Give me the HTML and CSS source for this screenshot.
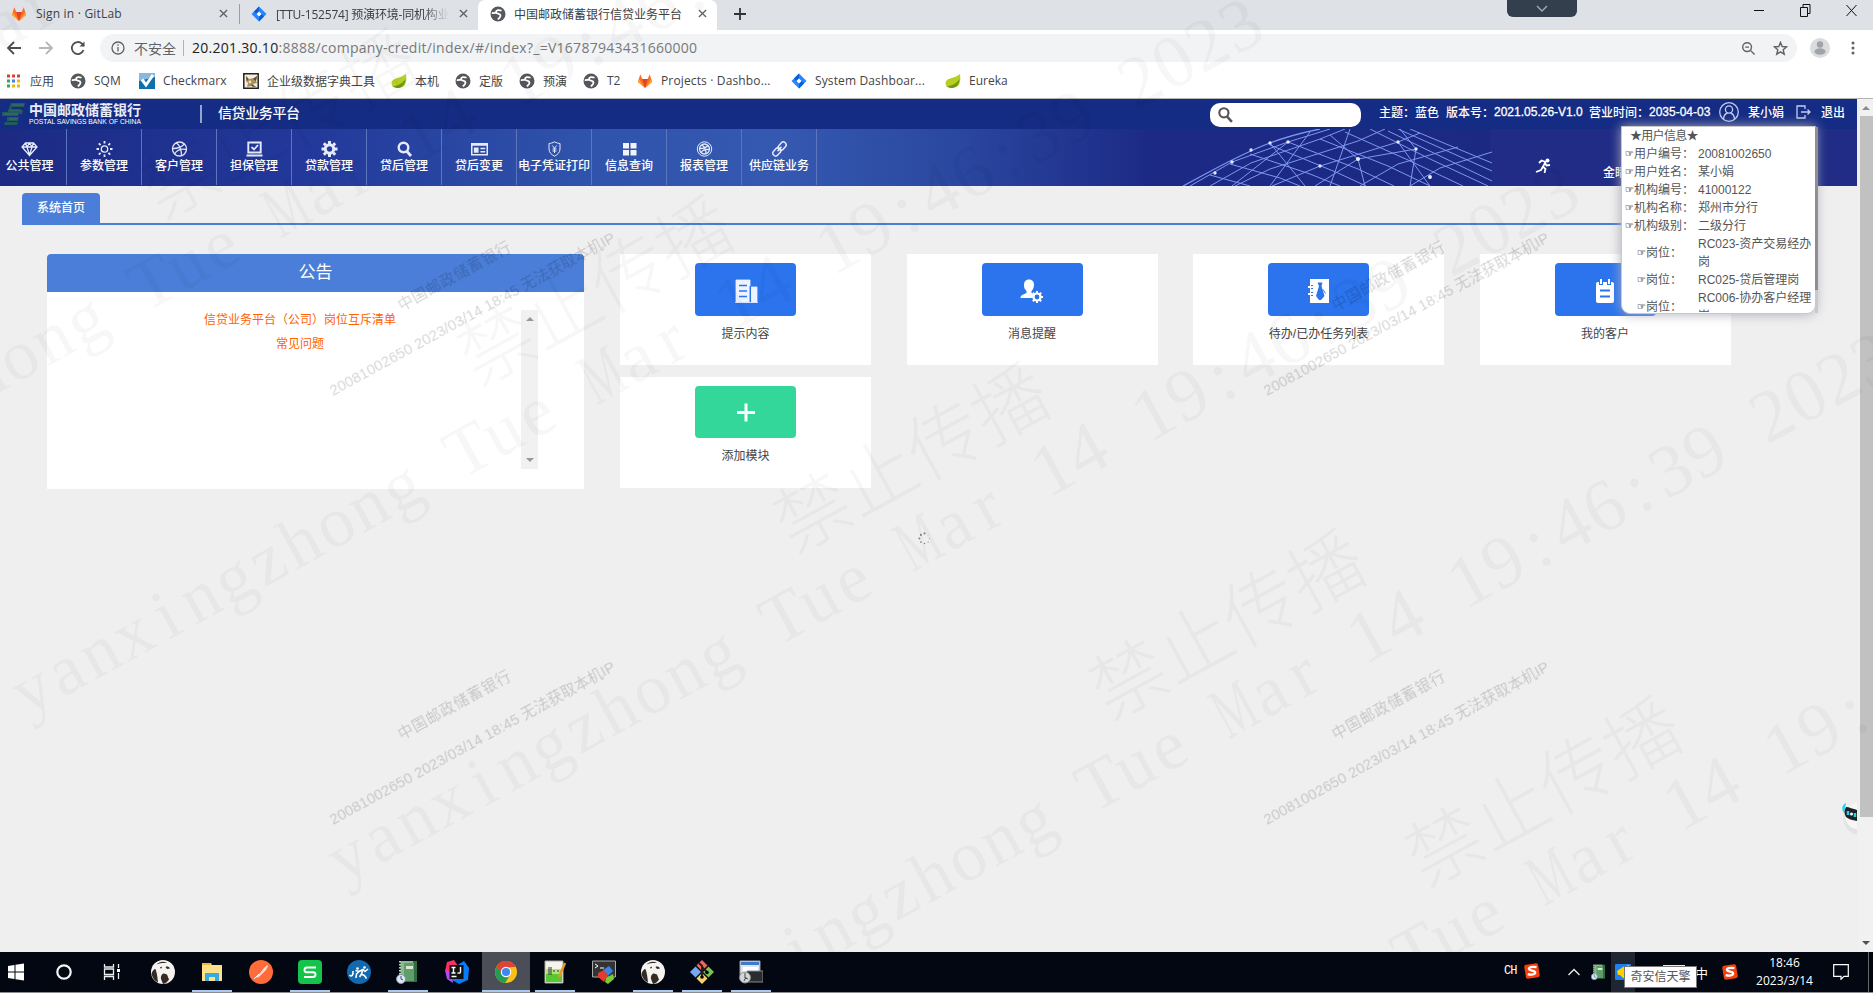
FILE: index.html
```
<!DOCTYPE html>
<html lang="zh-CN">
<head>
<meta charset="utf-8">
<title>中国邮政储蓄银行信贷业务平台</title>
<link rel="stylesheet" href="styles.css">
</head>
<body>
<svg class="defs" width="0" height="0">
  <defs>
    <symbol id="gitlab" viewBox="0 0 16 16"><path fill="#fc6d26" d="M1 9 3.2 1.2 5.4 6h5.2l2.2-4.8L15 9l-7 6z"/><path fill="#e24329" d="M5.2 6h5.6L8 15z"/><path fill="#fca326" d="M1 9l.8-3L8 15zM15 9l-.8-3L8 15z"/></symbol>
    <symbol id="jira" viewBox="0 0 16 16"><path fill="#2684ff" d="M8 .5 15.5 8 8 15.5.5 8z"/><path fill="#0b5cd8" d="M8 .5v5L5.500 8 3 5.500zM8 15.500v-5L10.500 8 13 10.500z"/><path fill="#fff" d="M8 5.500 10.500 8 8 10.500 5.500 8z"/></symbol>
    <symbol id="globe" viewBox="0 0 16 16"><circle cx="8" cy="8" r="7.500" fill="#54585d"/><path d="M11.500 4.800C9 3.600 6 4 6 6.200c0 2 4.500 1 4.500 3.400 0 1.800-1.500 2.400-2.500 4M1.800 7c1.500.2 2.700 0 4.200-.8" fill="none" stroke="#fff" stroke-width="1.800"/></symbol>
    <symbol id="leaf" viewBox="0 0 16 16"><path fill="#b9cf1f" d="M15 1c.8 6 .6 13-6 13.600-4 .5-8-.2-8.500-4C.5 4 10 6 15 1z"/><path fill="#6d9a16" d="M1 13.500C6 13 11 11 14.500 6c-.3 7-5 9.500-9 9z"/></symbol>
    <symbol id="sogou" viewBox="0 0 16 16"><rect x="1" y="1" width="14" height="14" rx="2" fill="#f4400c" transform="rotate(-9 8 8)"/><path d="M12.500 4.200C8 3.300 4.500 4 5 6.200c.6 1.800 6 1 6.200 3.200.1 2-4 2.700-7.500 1.700" fill="none" stroke="#fff" stroke-width="2.300"/></symbol>
    <symbol id="dbeaver" viewBox="0 0 24 24"><circle cx="12" cy="12" r="12" fill="#f5f3f0"/><path fill="#372923" d="M10 19c-.5-3 1-5.500 3-5.500l3 1 2 5c-2 3-3 3.500-6 4.500zM.5 14c1 4 3 7 6.500 8.500C6.500 18 6 13 4.500 9 3 9 1 11 .5 14zM5.500 4.500c3-3 7-3.500 10.500-1.500-4-.3-7 0-10.500 1.500zM14.500 7c1.500-1 3.500-.5 4.500 1.500l-3 .5zM9 7.500l1.500-1 .5 1.500-1.500.5z"/></symbol>
    <symbol id="book" viewBox="0 0 24 24"><path fill="#2f6d43" d="M4 1h17v21H4z"/><path fill="#8dbb8f" d="M5 1h12v20H5z"/><path fill="#5f9e69" d="M8 3h10v18H8z"/><path fill="#d9e8d5" d="M10 6h7v3h-7z"/><path stroke="#c5d0c5" stroke-width="2" stroke-dasharray="1.500 1.500" d="M4 1v21"/><circle cx="5" cy="19" r="4.500" fill="#dce8f3" stroke="#8498aa"/><path d="M5 16v3l2 1" stroke="#34546e" fill="none"/></symbol>
    <g id="mark">
      <text class="lc" text-anchor="middle" x="19 57.300 95.600 133.900 172.200 210.500 248.800 287.100 325.400 363.700 402 440.300">yanxingzhong</text>
      <text class="lc" text-anchor="middle" x="517 555.300 593.600">Tue</text>
      <text class="cap" transform="translate(670.200 0) scale(.6 1)" text-anchor="middle">M</text>
      <text class="lc" text-anchor="middle" x="708.500 746.800">ar</text>
      <text text-anchor="middle" x="823.400 861.700">14</text>
      <text text-anchor="middle" x="938.300 976.600 1014.900 1053.200 1091.500 1129.800 1168.100 1206.400">19:46:39</text>
      <text text-anchor="middle" x="1283 1321.300 1359.600 1397.900">2023</text>
    </g>
    <g id="stamp">
      <text x="101" y="-42" textLength="126">中国邮政储蓄银行</text>
      <text x="0" y="0" textLength="323">20081002650 2023/03/14 18:45 无法获取本机IP</text>
    </g>
  </defs>
</svg>

<div class="screen">
  <div class="tabs">
    <div class="tab t1"><svg class="i16"><use href="#gitlab"/></svg><span class="tt">Sign in · GitLab</span><svg class="x" viewBox="0 0 10 10"><path d="M1 1l8 8M9 1 1 9"/></svg></div>
    <div class="tab t2"><svg class="i16"><use href="#jira"/></svg><span class="tt fade">[TTU-152574] 预演环境-同机构业</span><svg class="x" viewBox="0 0 10 10"><path d="M1 1l8 8M9 1 1 9"/></svg></div>
    <div class="tab t3"><svg class="i16"><use href="#globe"/></svg><span class="tt">中国邮政储蓄银行信贷业务平台</span><svg class="x" viewBox="0 0 10 10"><path d="M1 1l8 8M9 1 1 9"/></svg></div>
    <svg class="plus" viewBox="0 0 14 14"><path d="M7 1v12M1 7h12"/></svg>
    <div class="dock"><svg width="12" height="8" viewBox="0 0 12 8"><path d="M1 1l5 5 5-5" fill="none" stroke="#a6afb8" stroke-width="1.300"/></svg></div>
    <div class="win">
      <svg width="11" height="11" viewBox="0 0 11 11"><path d="M0 5.500h10"/></svg>
      <svg width="11" height="13" viewBox="0 0 11 13"><path d="M.5 3.500h7v9h-7zM3 3V.5h7v9H8"/></svg>
      <svg width="11" height="13" viewBox="0 0 11 13"><path d="M.5 1l10 11M10.500 1l-10 11"/></svg>
    </div>
  </div>

  <div class="toolbar">
    <svg class="nv" viewBox="0 0 16 16"><path d="M15 8H2M8 2 2 8l6 6"/></svg>
    <svg class="nv off" viewBox="0 0 16 16"><path d="M1 8h13M8 2l6 6-6 6"/></svg>
    <svg class="nv" viewBox="0 0 16 16"><path d="M13.500 10A6 6 0 1 1 12 3.700L14 6"/><path d="M14.500 1.500v5h-5z" fill="#4c4f53" stroke="none"/></svg>
    <div class="omni">
      <svg class="info" viewBox="0 0 14 14"><circle cx="7" cy="7" r="6"/><path d="M7 6v4.500M7 3.300v1.500"/></svg>
      <span class="unsafe">不安全</span><i class="bar"></i>
      <span class="url"><b>20.201.30.10</b>:8888/company-credit/index/#/index?_=V16787943431660000</span>
      <svg class="om" viewBox="0 0 16 16"><circle cx="6.500" cy="6.500" r="4.700"/><path d="M10 10l4.500 4.500M4.500 6.500h4"/></svg>
      <svg class="om" viewBox="0 0 16 16"><path d="M8 1.500l1.800 4.400 4.700.4-3.600 3.100 1.100 4.700L8 11.600l-4 2.500 1.100-4.700L1.500 6.300l4.700-.4z"/></svg>
    </div>
    <svg class="me" viewBox="0 0 20 20"><circle cx="10" cy="10" r="10" fill="#dadcdf"/><circle cx="10" cy="6.500" r="3.200" fill="#a0a3a7"/><ellipse cx="10" cy="13.500" rx="5.500" ry="3.200" fill="#a0a3a7"/></svg>
    <svg class="dots" viewBox="0 0 4 14"><circle cx="2" cy="2" r="1.500"/><circle cx="2" cy="7" r="1.500"/><circle cx="2" cy="12" r="1.500"/></svg>
  </div>

  <div class="marks">
    <div><svg class="i16" viewBox="0 0 16 16"><g stroke-width="3" stroke-dasharray="3 2"><path d="M2 3h13" stroke="#e33b2e"/><path d="M2 8h5" stroke="#33a852"/><path d="M7 8h5" stroke="#3d82f0"/><path d="M12 8h4" stroke="#f7b50c"/><path d="M2 13h5" stroke="#33a852"/><path d="M7 13h9" stroke="#f7b50c"/></g></svg><span>应用</span></div>
    <div><svg class="i16"><use href="#globe"/></svg><span>SQM</span></div>
    <div><svg class="i16" viewBox="0 0 16 16"><path fill="#86b9dd" d="M0 0h16v4L7 14 0 8z"/><path fill="#0d71ac" d="M0 8v8h16V4z"/><path d="M3 6.500 7 12 14 2" stroke="#fff" stroke-width="3" fill="none"/></svg><span>Checkmarx</span></div>
    <div><svg class="i16" viewBox="0 0 16 16"><path fill="#f4efe2" stroke="#222" stroke-width="1.500" d="M.8.8h14.400v14.400H.8z"/><path fill="#a9905c" d="M3 3l3 3 5-1 3-2-1 5 1 2-4 1 3 3-5-1-4 1 1-4-2-2z"/><path fill="#5a4c39" d="M3 3l2.500 3L4 8zM10 6l4-3-1 5zM8 11l5 3-4-.5z"/><circle cx="7" cy="9" r="1.400" fill="#f0dfb0"/></svg><span>企业级数据字典工具</span></div>
    <div><svg class="i16"><use href="#leaf"/></svg><span>本机</span></div>
    <div><svg class="i16"><use href="#globe"/></svg><span>定版</span></div>
    <div><svg class="i16"><use href="#globe"/></svg><span>预演</span></div>
    <div><svg class="i16"><use href="#globe"/></svg><span>T2</span></div>
    <div><svg class="i16"><use href="#gitlab"/></svg><span>Projects · Dashbo...</span></div>
    <div><svg class="i16"><use href="#jira"/></svg><span>System Dashboar...</span></div>
    <div><svg class="i16"><use href="#leaf"/></svg><span>Eureka</span></div>
  </div>

  <div class="view">
    <div class="page">
      <header class="head">
        <svg class="emblem" viewBox="0 0 25 24"><path d="M10 1h14l-1 4H11l-1 3h12l-1 4H9l-3-1zM1 10h17l-1 4H1zM6 15h12l-1 4H6zM4 20h13l-1 3H3z" fill="#225b59"/><path d="M11 3h12M9 8h11M3 12h14M8 17h8" stroke="#3d746c" stroke-width="1"/></svg>
        <div class="brand"><b>中国邮政储蓄银行</b><svg width="114" height="10"><text x="0" y="7.500" textLength="112" lengthAdjust="spacingAndGlyphs">POSTAL SAVINGS BANK OF CHINA</text></svg></div>
        <i class="sep"></i><span class="plat">信贷业务平台</span>
        <div class="find"><svg width="15" height="16" viewBox="0 0 14 15"><circle cx="5.500" cy="5.500" r="4.300" fill="none" stroke="#555" stroke-width="2"/><path d="M8.500 9l4.500 5" stroke="#555" stroke-width="2.300"/></svg></div>
        <div class="meta">
          <span class="m1">主题：</span><span class="m2">蓝色</span><span class="m3">版本号：</span><span class="m4">2021.05.26-V1.0</span><span class="m5">营业时间：</span><span class="m6">2035-04-03</span>
          <svg class="user" viewBox="0 0 20 20"><circle cx="10" cy="10" r="9.300"/><circle cx="10" cy="7.500" r="3.600"/><path d="M4.500 17c.3-3.500 2-5.500 4-6M15.500 17c-.3-3.500-2-5.500-4-6"/></svg>
          <span class="m7">某小娟</span>
          <svg class="out" viewBox="0 0 15 14"><path d="M9 4V1H1v12h8v-3M5 7h9M11.500 4.500 14 7l-2.500 2.500"/></svg>
          <span>退出</span>
        </div>
      </header>
      <nav class="nav">
        <div><svg viewBox="0 0 16 16"><path d="M4 2h8l3.500 4L8 14.500.5 6zM.5 6h15M4 2l1.500 4L8 14l2.500-8L12 2M5.500 6 8 2l2.500 4"/></svg>公共管理</div>
        <div><svg viewBox="0 0 16 16"><circle cx="8" cy="8" r="3.200"/><path d="M8 0v2.500M8 13.500V16M0 8h2.500M13.500 8H16M2.300 2.300l1.800 1.800M11.900 11.900l1.800 1.800M13.700 2.300l-1.800 1.800M4.100 11.900l-1.800 1.800" stroke-width="1.800"/></svg>参数管理</div>
        <div><svg viewBox="0 0 16 16"><circle cx="8" cy="8" r="7"/><path d="M5 1.800c4 3.500 5 8 5 13M1 7.500c6 .2 9-1.500 12-4.500M3 13c3-5 7-5.500 12-4.500"/></svg>客户管理</div>
        <div><svg viewBox="0 0 16 16"><path d="M1.800 1.500h12.400v10H1.800zM0 14.500h16" stroke-width="1.900"/><path d="M5 6l2.500 2.500L11.500 4" stroke-width="1.800"/></svg>担保管理</div>
        <div><svg viewBox="0 0 16 16"><circle cx="8" cy="8" r="4.200" stroke-width="3"/><path d="M8 0v3M8 13v3M0 8h3M13 8h3M2.300 2.300l2 2M11.700 11.700l2 2M13.700 2.300l-2 2M4.300 11.700l-2 2" stroke-width="3"/></svg>贷款管理</div>
        <div><svg viewBox="0 0 16 16"><circle cx="7" cy="6.500" r="4.800" stroke-width="2.400"/><path d="M10.500 10.500 14.500 15" stroke-width="2.800"/></svg>贷后管理</div>
        <div><svg viewBox="0 0 18 16"><path d="M.8 2.500h16.400v11.500H.8z" stroke-width="1.600"/><path d="M1 2h16v2.500H1zM3 6.500h5v5.500H3z" fill="#e6ebfa" stroke="none"/><path d="M10 7.500h5M10 10.800h5" stroke-width="1.600"/></svg>贷后变更</div>
        <div><svg viewBox="0 0 16 16"><path d="M8 .8c2 1.200 3.500 1.500 5.500 1.700V8c0 3.500-2.500 5.700-5.500 7.200C5 13.700 2.500 11.500 2.500 8V2.500C4.500 2.300 6 2 8 .8zM5.800 4.500 8 7.200l2.200-2.700M8 7v5M6 8h4M6 10h4" stroke-width="1"/></svg>电子凭证打印</div>
        <div><svg viewBox="0 0 16 16"><path fill="#f0f3fc" stroke="none" d="M1.500 2h6v5.500h-6zM9 2h6v5.500H9zM1.500 9h6v5.500h-6zM9 9h6v5.500H9z"/></svg>信息查询</div>
        <div><svg viewBox="0 0 16 16"><circle cx="8" cy="8" r="7.200" stroke-width="1"/><circle cx="8" cy="8" r="5"/><path d="M5.500 4c3 2 4 5 4 8.500M3.500 7.500c4 0 6-1 8-3M4.500 11.500c2-3 5-3.500 8-3"/></svg>报表管理</div>
        <div><svg viewBox="0 0 16 16"><g transform="rotate(-48 8 8)" stroke-width="1.500"><rect x="-.5" y="5.200" width="9" height="5.600" rx="2.800"/><rect x="7.500" y="5.200" width="9" height="5.600" rx="2.800"/><path d="M5 8h6"/></g></svg>供应链业务</div>
        <svg class="net" viewBox="0 0 312 57">
          <g fill="none" stroke="#7d97f2" stroke-width="1">
            <path d="M3 57C35 40 60 25 90 14 108 7 125 3 140 0" stroke-width="1.300"/>
            <path d="M10 57 52 33 108 13 150 0M30 57 71 34 140 10 165 0M55 57 90 40 178 12 205 0M92 57 140 37 218 13 240 4M135 57 178 30 236 20M180 57l38-22 60-17M230 57l30-18 52-16"/>
            <path d="M230 0l82 34M218 0l94 42M208 2l104 50M190 0l60 30 58 27M165 3l63 28 55 26M140 10l68 27 42 20M108 13l70 27 36 17M90 16l68 28 28 13M70 25l60 20 30 12M50 35l50 14 20 8M30 46l40 11" />
            <path d="M52 57 108 13M90 57 130 3M125 57l-35-43M150 57 170 0M185 57l-7-27L150 6M230 57 236 20 220 0M250 57l-32-44"/>
          </g>
          <g fill="#e5ebff"><circle cx="52" cy="33" r="1.100"/><circle cx="71" cy="21" r="1"/><circle cx="90" cy="14" r="1"/><circle cx="108" cy="13" r="1.100"/><circle cx="178" cy="30" r="1.400"/><circle cx="218" cy="13" r="1.100"/><circle cx="250" cy="48" r="1.300"/><circle cx="140" cy="37" r="1"/><circle cx="236" cy="20" r="1"/><circle cx="35" cy="44" r="1"/></g>
        </svg>
        <svg class="run" viewBox="0 0 16 16"><circle cx="12.500" cy="2.500" r="2" fill="#fff" stroke="none"/><path d="M4 5l2.500-2.500 4 1.500L8 8.500 10.500 11 9.500 15M8 8.500 6 12l-5 2M10 5l1.500 2.500L15 7" stroke="#fff" stroke-width="1.800"/></svg>
        <span class="eye">金睛</span>
      </nav>
      <div class="crumbs"><span>系统首页</span></div>
      <main class="main">
        <section class="notice">
          <h2>公告</h2>
          <div class="nbody">
            <div class="links"><a>信贷业务平台（公司）岗位互斥清单</a><a>常见问题</a></div>
            <div class="mini"><i class="up"></i><i class="down"></i></div>
          </div>
        </section>
        <section class="grid">
          <div class="card"><div class="btn"><svg viewBox="0 0 24 24"><path d="M1 23.500h23M2 1h14v22H2zM17 8h6v15h-6z" fill="#eef4ff" stroke="#eef4ff" stroke-width=".8"/><path d="M5 6.500h8M5 12h8M5 17.500h8M16.300 7v16" stroke="#2b74ee" stroke-width="1.500"/></svg></div>提示内容</div>
          <div class="card"><div class="btn"><svg viewBox="0 0 24 24"><path fill="#fff" d="M9 .5c3.500 0 5.300 2.500 5 6-.3 3-1.500 4.500-2.500 5.500v2L14 16l-1 3H.5c0-3 3-3.500 6-5v-2C5 10.500 4 9 4 6.500c-.2-3.500 1.500-6 5-6z"/><circle cx="17" cy="18" r="3.500" fill="#2b74ee" stroke="#fff" stroke-width="2.200"/><path stroke="#fff" stroke-width="2" d="M17 12v2.500M17 21.500V24M11 18h2.500M20.500 18H23M12.800 13.800l1.700 1.700M19.500 20.500l1.700 1.700M21.200 13.800l-1.700 1.700M14.500 20.500l-1.700 1.700"/></svg></div>消息提醒</div>
          <div class="card"><div class="btn"><svg viewBox="0 0 24 24"><path fill="#fff" d="M3 0h19v24H3z"/><path d="M1 8h5M1 15h5" stroke="#fff" stroke-width="2.200"/><path fill="#2b74ee" d="M10.500 3.500h5L14.500 7l3 10-3.500 4h-2l-3-4 3-10z"/><path d="M4 6.500h2M4 9.500h2M4 13.500h2M4 16.500h2M16 10.500l2.500 4" stroke="#2b74ee"/></svg></div>待办/已办任务列表</div>
          <div class="card"><div class="btn"><svg viewBox="0 0 24 24"><rect x="3" y="3" width="18" height="21" rx="2" fill="#fff"/><path d="M8 0v6M16 0v6" stroke="#2b74ee" stroke-width="4"/><path d="M8 0v5M16 0v5" stroke="#fff" stroke-width="2"/><path d="M7 11.500h10M7 17.500h10" stroke="#2b74ee" stroke-width="2.200"/></svg></div>我的客户</div>
          <div class="card add"><div class="btn"><svg viewBox="0 0 24 24"><path d="M12 2.500v18M3 11.500h18" stroke="#fff" stroke-width="3"/></svg></div>添加模块</div>
        </section>
      </main>
      <svg class="spin" viewBox="0 0 14 14"><g fill="#666"><circle cx="7" cy="1.500" r="1.100"/><circle cx="3.100" cy="3.100" r="1.100"/><circle cx="1.500" cy="7" r="1"/><circle cx="3.100" cy="10.900" r=".9"/><circle cx="7" cy="12.500" r=".8"/><circle cx="10.900" cy="10.900" r=".6"/><circle cx="12.500" cy="7" r=".5"/><circle cx="10.900" cy="3.100" r=".3"/></g></svg>
      <svg class="robot" viewBox="0 0 16 34"><ellipse cx="19" cy="17" rx="16.500" ry="16" fill="#e3e3e3"/><ellipse cx="20" cy="14" rx="16" ry="14" fill="#f7f7f7"/><path d="M5 1C1 3 0 7 3 11l1-5z" fill="#1fd5f5"/><path d="M5 5c3 0 7 2 11 3v11C11 18 7 17 5 15 3 12 3 8 5 5z" fill="#1d2226"/><path d="M7 9v4M14 11v4" stroke="#2ad0ee" stroke-width="2.500"/><circle cx="10.500" cy="12" r="1.500" fill="#fff"/></svg>
      <div class="pop">
        <div class="ptitle">★用户信息★</div>
        <dl>
          <dt><i>☞</i>用户编号：</dt><dd>20081002650</dd>
          <dt><i>☞</i>用户姓名：</dt><dd>某小娟</dd>
          <dt><i>☞</i>机构编号：</dt><dd>41000122</dd>
          <dt><i>☞</i>机构名称：</dt><dd>郑州市分行</dd>
          <dt><i>☞</i>机构级别：</dt><dd>二级分行</dd>
          <dt class="in"><i>☞</i>岗位：</dt><dd>RC023-资产交易经办<br>岗</dd>
          <dt class="in"><i>☞</i>岗位：</dt><dd>RC025-贷后管理岗</dd>
          <dt class="in"><i>☞</i>岗位：</dt><dd>RC006-协办客户经理<br>岗</dd>
        </dl>
      </div>
      <i class="popbar"></i>
    </div>
    <div class="scroll"><i class="up"></i><b></b><i class="down"></i></div>
  </div>

  <svg class="wm" viewBox="0 0 1873 993">
    <g class="big">
      <use href="#mark" transform="translate(-606 384) rotate(-28.700)"/>
      <use href="#mark" transform="translate(-290 551) rotate(-28.700)"/>
      <use href="#mark" transform="translate(26 718) rotate(-28.700)"/>
      <use href="#mark" transform="translate(342 885) rotate(-28.700)"/>
      <use href="#mark" transform="translate(658 1052) rotate(-28.700)"/>
      <use href="#mark" transform="translate(974 1219) rotate(-28.700)"/>
      <text class="ban" transform="translate(161 220) rotate(-28.700)">禁止传播</text>
      <text class="ban" transform="translate(477 387) rotate(-28.700)">禁止传播</text>
      <text class="ban" transform="translate(793 554) rotate(-28.700)">禁止传播</text>
      <text class="ban" transform="translate(1109 721) rotate(-28.700)">禁止传播</text>
      <text class="ban" transform="translate(1425 888) rotate(-28.700)">禁止传播</text>
    </g>
    <g class="small">
      <use href="#stamp" transform="translate(333 396) rotate(-28.700)"/>
      <use href="#stamp" transform="translate(1267 396) rotate(-28.700)"/>
      <use href="#stamp" transform="translate(333 825) rotate(-28.700)"/>
      <use href="#stamp" transform="translate(1267 825) rotate(-28.700)"/>
    </g>
  </svg>

  <footer class="task">
    <div class="apps">
      <div class="a1"><svg viewBox="0 0 24 24"><path fill="#fff" d="M4 6l6.500-1v6.500H4zM11.500 4.800 20 3.600v7.900h-8.500zM4 12.500h6.500V19L4 18zM11.500 12.500H20v7.900l-8.500-1.200z"/></svg></div>
      <div class="a2"><svg viewBox="0 0 24 24"><circle cx="12" cy="12" r="6.700" fill="none" stroke="#f4f4f4" stroke-width="2.200"/></svg></div>
      <div class="a3"><svg viewBox="0 0 24 24"><path d="M4.500 4v3h9V4M4.500 20v-3.500h9V20M4.500 9h9v5.500h-9zM18.500 4v4M18.500 13v6" fill="none" stroke="#eee" stroke-width="1.300"/><path fill="#fff" d="M17 9h3v3h-3z"/></svg></div>
      <div class="a4"><svg><use href="#dbeaver"/></svg></div>
      <div class="a5 on"><svg viewBox="0 0 24 24"><path fill="#e9b93c" d="M2 3h9l1 2H2z"/><path fill="#ffe08a" d="M2 5h20v16H2z"/><path fill="#35abe2" d="M5 13h14v8h-4v-4H9v4H5z"/></svg></div>
      <div class="a6"><svg viewBox="0 0 24 24"><circle cx="12" cy="12" r="12" fill="#ff6c3a"/><path d="M7 18l8-10 3-3 1 1-2 4-7 7z" fill="#ffd9ca"/><path d="M5 19l5-5" stroke="#fff"/></svg></div>
      <div class="a7 on"><svg viewBox="0 0 24 24"><rect width="24" height="24" rx="4" fill="#14c44a"/><path d="M18 7.500H9Q6.500 7.500 6.500 10T9 12.200h6q2.500 0 2.500 2.300T15 17H6" fill="none" stroke="#fff" stroke-width="1.900"/></svg></div>
      <div class="a8"><svg viewBox="0 0 24 24"><circle cx="12" cy="12" r="12" fill="#1169b0"/><path d="M2.500 15c2 2 4 .5 3.500-4M8.500 10.500l3.500 1-2.500 2.500-.5 4M12 11.500l4-2 2 2 3-2.500M15.500 10.500l-1 3.500 3 1.500 2 3M14.500 14l-2 3" stroke="#fff" stroke-width="1.600" fill="none"/><circle cx="10.500" cy="8.500" r="1.300" fill="#fff"/><circle cx="17.500" cy="7.500" r="1.300" fill="#fff"/></svg></div>
      <div class="a9 on"><svg><use href="#book"/></svg></div>
      <div class="a10"><svg viewBox="0 0 24 24"><path fill="#fc2f64" d="M2 2l7-2 4 6-5 8-8-3z"/><path fill="#b74af7" d="M0 10l7 2 1 11-6-4z"/><path fill="#087cfa" d="M14 4l5-3 5 7-1 12-9 4-7-4z"/><path fill="#111" d="M4.500 5h14v14h-14z"/><path d="M6.500 7.500h4M8.500 7.500V13M6.500 13h4M15.500 7v5q0 1.500-3 1M6.500 16.500h5" stroke="#fff" stroke-width="1.400" fill="none"/></svg></div>
      <div class="a11 on act"><svg viewBox="0 0 24 24"><circle cx="12" cy="12" r="11" fill="#fbc116"/><path fill="#dc4535" d="M2.500 6.500A11 11 0 0 1 21.500 6.500L12 8z"/><path fill="#dc4535" d="M2.500 6.500 8 15l4-3V7h9.500A11 11 0 0 0 2.500 6.500z"/><path fill="#249c53" d="M2.500 6.500A11 11 0 0 0 11 23l5-8-8-1z"/><circle cx="12" cy="12" r="5.200" fill="#fff"/><circle cx="12" cy="12" r="4.100" fill="#4285f4"/></svg></div>
      <div class="a12 on"><svg viewBox="0 0 24 24"><path fill="#f5f5ec" stroke="#a9aaa0" d="M2 1h18v22H2z"/><path fill="#55c832" d="M3 13h16v9H3z"/><path fill="#b4e37a" d="M3 9h16v5H3z"/><path d="M6 7v8M8 7v8M10 11h2M14 11h2" stroke="#333"/><path d="M22 3l-6 14" stroke="#e59a26" stroke-width="2.500"/></svg></div>
      <div class="a13"><svg viewBox="0 0 24 24"><path fill="#333" stroke="#aaa" d="M.5 1h23v16H.5z"/><path d="M3 4l3 2-3 2M8 8h4" stroke="#fff" fill="none"/><path fill="#3a84e8" d="M11 10l6-4 4 5-5 5z"/><path fill="#e23b31" d="M6 13l6-3 4 5-4 7-6-5z"/><path fill="#77cf2d" d="M14 18l7-4 1 5-6 5-3-2z"/></svg></div>
      <div class="a14 on"><svg><use href="#dbeaver"/></svg></div>
      <div class="a15 on"><svg viewBox="0 0 24 24"><path fill="#f0655d" d="M12 0l5.500 5.500L12 11 6.500 5.500z"/><path fill="#74a8f3" d="M5.500 6.500 11 12l-5.500 5.500L0 12z"/><path fill="#79c258" d="M18.500 6.500 24 12l-5.500 5.500L13 12z"/><path fill="#f3d36a" d="M12 13l5.500 5.500L12 24l-5.500-5.500z"/><path d="M9 3l3 3M12 5v12M12 7l5 5" stroke="#221a18" stroke-width="1.800"/><circle cx="12" cy="17" r="1.800"/><circle cx="17" cy="12.500" r="1.800"/></svg></div>
      <div class="a16 on"><svg viewBox="0 0 24 24"><path fill="#dbe5ef" stroke="#8d9aa7" d="M1 1h20v14H1z"/><path fill="#3f79cf" d="M2 2h18v3H2z"/><path fill="#fff" d="M4 7h15v7H4z"/><path fill="#292d30" stroke="#888" d="M8 11h16v11H8z"/><circle cx="6" cy="17.500" r="5.500" fill="#d5d8da" stroke="#888"/><path d="M6 13v5l3 1M5 21l2-4" stroke="#444" fill="none"/></svg></div>
    </div>
    <div class="tray">
      <span class="ch">CH</span><svg class="sg"><use href="#sogou"/></svg>
      <svg class="cv" viewBox="0 0 12 8"><path d="M.5 7 6 1.500 11.500 7" fill="none" stroke="#eee" stroke-width="1.300"/></svg>
      <svg class="gb"><use href="#book"/></svg>
      <div class="hot"><svg width="16" height="16" viewBox="0 0 16 16"><rect width="16" height="16" rx="1" fill="#1d82ee"/><path fill="#ffd200" d="M2 7l6-4 6-2v13H8l-3-3H3z"/></svg></div>
      <svg class="peek" viewBox="0 0 22 4"><path fill="#eee" d="M0 1h22v3H0z"/></svg>
      <span class="zh">中</span><svg class="sg2"><use href="#sogou"/></svg>
      <div class="clock"><span>18:46</span><span>2023/3/14</span></div>
      <svg class="nt" viewBox="0 0 16 16"><path d="M.7.7h14.600v11.600H11L8 15.300V12.300H.7z" fill="none" stroke="#fff" stroke-width="1.200"/></svg>
      <i class="desk"></i>
      <div class="tip">奇安信天擎</div>
    </div>
  </footer>
</div>
</body>
</html>
```
FILE: styles.css
```
* { box-sizing: border-box; }
body { margin: 0; font: 12px "Open Sans", "Noto Sans CJK SC", sans-serif; color: #444; }
svg { flex: none; display: block; }
i { font-style: normal; }
.defs { position: absolute; }
.screen { width: 1873px; height: 993px; overflow: hidden; position: relative; display: flex; flex-direction: column; background: #fff; }
.i16 { width: 16px; height: 16px; }

/* browser tabs */
.tabs { height: 30px; flex: none; background: #dee1e6; display: flex; align-items: center; color: #3c4043; padding-bottom: 3px; }
.tab { display: flex; align-items: center; gap: 9px; height: 30px; margin-top: 3px; padding-bottom: 3px; }
.tt { white-space: nowrap; overflow: hidden; }
.t1 { width: 240px; padding-left: 11px; background: linear-gradient(#9a9da1, #9a9da1) right 0 top 4px / 1px 20px no-repeat; }
.t1 .tt { width: 174px; letter-spacing: .2px; }
.t2 { width: 238px; padding-left: 11px; }
.t2 .tt { width: 173px; margin-right: 1px; letter-spacing: -.2px; }
.t3 { width: 239px; padding-left: 12px; background: #fff; border-radius: 7px 7px 0 0; gap: 8px; }
.t3 .tt { width: 172px; margin-right: 4px; }
.fade { -webkit-mask-image: linear-gradient(90deg, #000 85%, transparent); mask-image: linear-gradient(90deg, #000 85%, transparent); }
.x { width: 9px; height: 9px; fill: none; stroke: #5f6368; stroke-width: 1.500; }
.plus { width: 14px; height: 14px; margin-left: 16px; stroke: #333; stroke-width: 1.800; }
.dock { width: 70px; height: 17px; margin: 0 0 10px 760px; background: #343f4d; border-radius: 0 0 6px 6px; display: flex; justify-content: center; align-items: center; }
.win { display: flex; gap: 35px; margin-left: 177px; align-items: center; margin-top: -6px; }
.win svg { fill: none; stroke: #111; stroke-width: 1; }

/* toolbar */
.toolbar { height: 36px; flex: none; display: flex; align-items: center; padding-left: 6px; }
.nv { width: 16px; height: 16px; margin-right: 16px; fill: none; stroke: #4c4f53; stroke-width: 1.800; }
.off { stroke: #b5b8bb; }
.omni { width: 1697px; height: 28px; margin-left: -2px; border-radius: 14px; background: #f1f3f4; display: flex; align-items: center; padding: 0 0 1px 11px; }
.info { width: 14px; height: 14px; fill: none; stroke: #5f6368; stroke-width: 1.300; }
.unsafe { width: 58px; padding-left: 9px; font-size: 14px; color: #5f6368; white-space: nowrap; }
.bar { width: 1px; height: 16px; background: #b0b3b7; margin-right: 8px; }
.url { width: 1549px; font-size: 14px; color: #77797d; letter-spacing: .280px; white-space: nowrap; margin-top: -1px; }
.url b { font-weight: 400; color: #202124; }
.om { width: 15px; height: 15px; margin: 1px 0 0 17px; fill: none; stroke: #5f6368; stroke-width: 1.500; }
.url + .om { margin-left: 0; }
.me { width: 20px; height: 20px; margin-left: 13px; }
.dots { width: 4px; height: 14px; margin-left: 21px; fill: #5f6368; }

/* bookmarks */
.marks { height: 33px; flex: none; display: flex; align-items: center; padding: 0 0 3px 5px; border-bottom: 1px solid #b3b3b3; }
.marks div { display: flex; gap: 8px; align-items: center; white-space: nowrap; flex: none; width: 64px; }
.marks div:nth-child(1) { width: 65px; gap: 9px; }
.marks div:nth-child(2) { width: 69px; }
.marks div:nth-child(3) { width: 104px; letter-spacing: .1px; }
.marks div:nth-child(4) { width: 148px; }
.marks div:nth-child(8) { width: 54px; }
.marks div:nth-child(9) { width: 154px; letter-spacing: .140px; }
.marks div:nth-child(10) { width: 154px; letter-spacing: .130px; }

/* viewport */
.view { height: 853px; flex: none; display: flex; background: #efefef; }
.page { width: 1857px; position: relative; font-family: "Liberation Sans", "Noto Sans CJK SC", sans-serif; }
.scroll { width: 14px; margin-left: 2px; background: #f1f1f1; display: flex; flex-direction: column; align-items: center; }
.scroll b { width: 13px; height: 701px; background: #c1c1c1; margin: 6px 0 auto; }
.up, .down { border: 4px solid transparent; }
.up { border-top: 0; border-bottom-color: #8b8b8b; }
.down { border-bottom: 0; border-top-color: #505050; }
.scroll .up { margin-top: 7px; }
.scroll .down { margin-bottom: 7px; }

.head { height: 30px; background: #152c84; display: flex; align-items: center; color: #fff; }
.emblem { width: 25px; height: 24px; margin-left: 1px; }
.brand { width: 112px; margin-left: 3px; height: 24px; }
.brand b { display: block; font: 700 14px/15px "Noto Sans CJK SC", sans-serif; white-space: nowrap; color: #e9ecf6; }
.brand svg { overflow: visible; margin-top: -1px; }
.brand text { font: 400 7.500px "Liberation Sans", sans-serif; fill: #fff; }
.sep { width: 2px; height: 18px; background: #98a3cb; margin: -1px 0 0 59px; }
.plat { font-size: 14px; font-weight: 500; letter-spacing: -.400px; margin: -5px 0 0 16px; width: 992px; }
.find { width: 151px; height: 24px; border-radius: 10px; background: #fff; padding: 4px 8px; margin-top: 2px; }
.meta { display: flex; align-items: center; margin-left: 18px; white-space: nowrap; font-weight: 500; margin-top: -4px; }
.meta span { margin-top: -1px; }
.m4, .m6 { -webkit-text-stroke: .3px #fff; }
.m1 { width: 36px; } .m2 { width: 31px; } .m3 { width: 48px; } .m4 { width: 95px; } .m5 { width: 60px; } .m6 { width: 70px; }
.user { width: 20px; height: 20px; }
.meta .m7 { width: 48px; margin-left: 9px; }
.user, .out { fill: none; stroke: #c4cdec; stroke-width: 1.300; }
.out { width: 15px; height: 14px; margin-right: 10px; }

.nav { height: 57px; display: flex; color: #fff; font-weight: 500; background: linear-gradient(90deg, #1c2a83 0, #22389a 300px, #3054ab 600px, #3558b0 780px, #2b48a0 950px, #1c2a86 1150px, #1b2982 1490px, #202c86 1491px); }
.nav div { width: 75px; flex: none; border-right: 1px solid #5c76bd; height: 56px; padding-top: 12px; display: flex; flex-direction: column; align-items: center; white-space: nowrap; line-height: 18px; }
.nav div:first-child { width: 67px; padding-right: 7px; }
.nav svg { fill: none; stroke: #e6ebfa; stroke-width: 1.300; }
.nav div svg { width: 17px; height: 16px; }
.nav .net { width: 312px; height: 57px; margin-left: 363px; }
.nav .run { width: 16px; height: 16px; margin: 29px 0 0 43px; }
.eye { margin: 34px 0 0 52px; }

.crumbs { margin: 7px 57px 0 22px; height: 32px; border-bottom: 2px solid #4a7ed8; }
.crumbs span { display: block; width: 78px; height: 32px; line-height: 30px; border-radius: 4px 4px 0 0; background: #4a7ed8; color: #fff; text-align: center; font-weight: 500; }
.main { display: flex; gap: 36px; margin: 29px 0 0 47px; }
.notice { width: 537px; height: 235px; background: #fff; }
.notice h2 { margin: 0; height: 38px; line-height: 38px; font-size: 17px; font-weight: 400; text-align: center; color: #fff; background: #4a7ed8; border-radius: 4px 4px 0 0; }
.nbody { display: flex; padding: 18px 0 0 32px; }
.links { width: 442px; display: flex; flex-direction: column; align-items: center; line-height: 24px; color: #ff6200; margin-top: -2px; }
.mini { width: 17px; height: 159px; background: #f1f1f1; display: flex; flex-direction: column; justify-content: space-between; align-items: center; padding: 7px 0; }
.mini .up { border-bottom-color: #999; } .mini .down { border-top-color: #999; }
.grid { display: grid; grid-template-columns: repeat(3, 251px) 251px; column-gap: 35.500px; row-gap: 12px; align-content: start; }
.card { height: 111px; background: #fff; display: flex; flex-direction: column; align-items: center; padding-top: 9px; line-height: 36px; }
.btn { width: 101px; height: 53px; border-radius: 4px; background: #2b74ee; display: flex; align-items: center; justify-content: center; }
.add .btn { background: #34d79a; height: 52px; }
.btn svg { width: 24px; height: 24px; margin-top: 2px; }
.spin { width: 13px; height: 13px; position: absolute; left: 918px; top: 433px; opacity: .8; }
.robot { width: 16px; height: 34px; position: absolute; right: 0; top: 703px; }

/* user info overlay */
.pop { position: absolute; left: 1621px; top: 27px; width: 195px; height: 188px; overflow: hidden; background: #fff; border: 1px solid #c9c9c9; border-radius: 0 0 9px 9px; box-shadow: 0 0 12px #aaaab8; line-height: 18px; color: #555; }
.ptitle { padding-left: 8px; letter-spacing: -.700px; }
.pop dl { margin: 0; display: grid; grid-template-columns: 76px 1fr; align-items: center; white-space: nowrap; }
.pop dt { padding-left: 3px; display: flex; }
.pop dt i { width: 9px; font-size: 10px; font-family: "DejaVu Sans", sans-serif; color: #888; -webkit-text-stroke: .3px #888; }
.pop dt.in { padding-left: 15px; }
.pop dd { margin: 0; }
.popbar { position: absolute; left: 1815px; top: 28px; width: 3px; height: 186px; background: linear-gradient(#8f8f92 163px, #c9c9c9 163px); }

/* watermark layer */
.wm { position: absolute; left: 0; top: 0; width: 1873px; height: 993px; pointer-events: none; }
.big { font-family: "Liberation Serif", serif; font-size: 74px; fill: #000; opacity: .032; }
.lc { font-size: 71px; }
.cap { font-size: 74px; }
.ban { font: 200 75px "Noto Sans CJK SC", sans-serif; }
.small { fill: #000; opacity: .17; font-family: "Liberation Sans", "Noto Sans CJK SC", sans-serif; font-size: 15px; }

/* taskbar */
.task { position: relative; height: 41px; flex: none; background: #030711; border-bottom: 1px solid #8b8c92; display: flex; color: #fff; }
.apps { display: flex; width: 1500px; padding-left: 40px; margin-left: -48px; }
.apps div { width: 49px; height: 40px; display: flex; justify-content: center; align-items: center; flex: none; }
.apps .a1, .apps .a2, .apps .a3 { width: 48px; }
.apps .a4 { width: 52px; padding-left: 1px; }
.apps .a4 + div { margin-left: -1px; }
.apps .a10 { width: 50px; }
.apps .a11 { width: 48px; }
.apps svg { width: 24px; height: 24px; }
.on { background: linear-gradient(#a9c9f0, #a9c9f0) center bottom / 40px 2px no-repeat; }
.act { background: linear-gradient(#a9c9f0, #a9c9f0) center bottom / 48px 2px no-repeat, #4b4e57; }
.tray { display: flex; align-items: center; margin-left: 52px; height: 40px; width: 369px; flex: none; }
.ch { font: 12px "Liberation Mono", monospace; width: 20px; letter-spacing: -1px; margin-top: -3px; }
.sg, .sg2 { width: 16px; height: 16px; }
.sg { margin-top: -3px; }
.cv { width: 12px; height: 8px; margin-left: 28px; }
.gb { width: 16px; height: 16px; margin-left: 11px; }
.hot { width: 24px; height: 40px; margin-left: 4px; background: #1f2632; display: flex; align-items: center; justify-content: center; }
.peek { width: 22px; height: 4px; margin: 0 0 12px 28px; }
.zh { margin-left: 10px; font-size: 13px; width: 13px; }
.sg2 { margin-left: 14px; }
.clock { width: 93px; margin-right: 2px; text-align: center; display: flex; flex-direction: column; line-height: 18.500px; }
.nt { width: 16px; height: 16px; }
.desk { width: 1px; height: 40px; background: #666; margin-left: 19px; }
.tip { position: absolute; left: 1624px; top: 14px; width: 73px; height: 22px; line-height: 19px; background: #fff; border: 1px solid #777; color: #575757; text-align: center; white-space: nowrap; }
```
